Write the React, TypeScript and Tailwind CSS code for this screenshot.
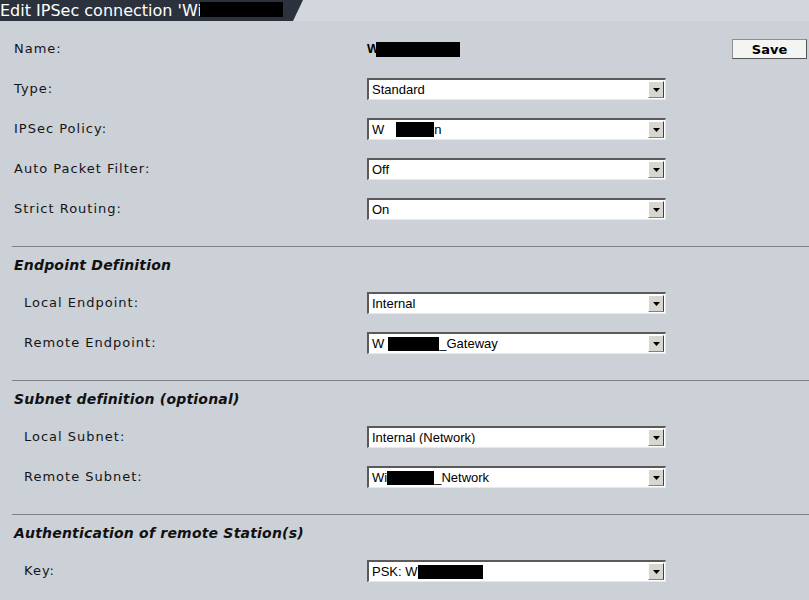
import React from "react";

const Redact = ({ w, h = 15 }: { w: number; h?: number }) => (
  <span className="inline-block bg-black align-middle shrink-0" style={{ width: w, height: h }} />
);

const Select = ({ children }: { children: React.ReactNode }) => (
  <div className="w-[299px] h-[22px] bg-white border-t-2 border-l-2 border-t-[#5a5a5a] border-l-[#5a5a5a] border-b border-r border-b-[#e8e8e8] border-r-[#e8e8e8] flex items-center">
    <div className="flex-1 pl-[3px] text-[13px] leading-none text-black whitespace-nowrap overflow-hidden flex items-center font-['Liberation_Sans',Arial,sans-serif]">
      {children}
    </div>
    <div className="w-[16px] h-[17px] mr-[1px] bg-[#d8d6d0] border-t border-l border-t-white border-l-white border-b border-r border-b-[#808080] border-r-[#404040] flex items-center justify-center">
      <svg width="7" height="4" viewBox="0 0 7 4"><polygon points="0,0 7,0 3.5,4" fill="#000" /></svg>
    </div>
  </div>
);

const Row = ({ label, indent, children }: { label: string; indent?: boolean; children?: React.ReactNode }) => (
  <div className="h-[40px] flex items-center">
    <div className={(indent ? "pl-[24px] " : "pl-[14px] ") + "w-[367px] text-[13px] tracking-[1px] text-[#151515]"}>{label}</div>
    {children}
  </div>
);

const Section = ({ title }: { title: string }) => (
  <>
    <div className="mt-[17px] ml-[12px] h-px bg-[#7e838a]" />
    <div className="h-[36px] flex items-center pl-[14px] text-[14px] italic font-bold text-[#111] tracking-[0.2px]">{title}</div>
  </>
);

export default function App() {
  return (
    <div className="w-[809px] h-[600px] overflow-hidden bg-[#ccd0d7] font-['DejaVu_Sans',Verdana,sans-serif]">
      <div className="relative h-[21px] bg-[#d3d6dc]">
        <div className="absolute inset-0 bg-[#2c323d] [clip-path:polygon(0_0,303px_0,293px_100%,0_100%)]" />
        <div className="relative h-[21px] flex items-center text-white text-[16px] leading-none whitespace-nowrap">
          <span>Edit IPSec connection 'Wi</span>
          <span className="absolute left-[200px] top-[2px] w-[83px] h-[15px] bg-black" />
        </div>
      </div>
      <div className="h-[8px]" />
      <div className="h-[40px] flex items-center">
        <div className="pl-[14px] w-[367px] text-[13px] tracking-[1px] text-[#151515]">Name:</div>
        <div className="flex items-center text-[13px] font-bold font-['Liberation_Sans',Arial,sans-serif]">
          <span>W</span>
          <span className="-ml-[3px]"><Redact w={84} /></span>
        </div>
        <div className="flex-1" />
        <button className="w-[75px] h-[20px] mr-[2px] bg-[#f4f4f2] border border-[#8e8e8e] border-b-[#555] border-r-[#555] text-[13px] font-bold leading-none text-black font-['DejaVu_Sans',Verdana,sans-serif]">
          Save
        </button>
      </div>
      <Row label="Type:"><Select>Standard</Select></Row>
      <Row label="IPSec Policy:">
        <Select>
          <span>W</span><span className="w-[12px]" /><Redact w={38} h={15} /><span>n</span>
        </Select>
      </Row>
      <Row label="Auto Packet Filter:"><Select>Off</Select></Row>
      <Row label="Strict Routing:"><Select>On</Select></Row>

      <Section title="Endpoint Definition" />
      <Row label="Local Endpoint:" indent><Select>Internal</Select></Row>
      <Row label="Remote Endpoint:" indent>
        <Select>
          <span>W</span><span className="w-[4px]" /><Redact w={51} h={14} /><span>_Gateway</span>
        </Select>
      </Row>

      <Section title="Subnet definition (optional)" />
      <Row label="Local Subnet:" indent><Select>Internal (Network)</Select></Row>
      <Row label="Remote Subnet:" indent>
        <Select>
          <span>Wi</span><Redact w={47} h={14} /><span>_Network</span>
        </Select>
      </Row>

      <Section title="Authentication of remote Station(s)" />
      <Row label="Key:" indent>
        <Select>
          <span>PSK: W</span><Redact w={65} h={14} />
        </Select>
      </Row>
    </div>
  );
}
